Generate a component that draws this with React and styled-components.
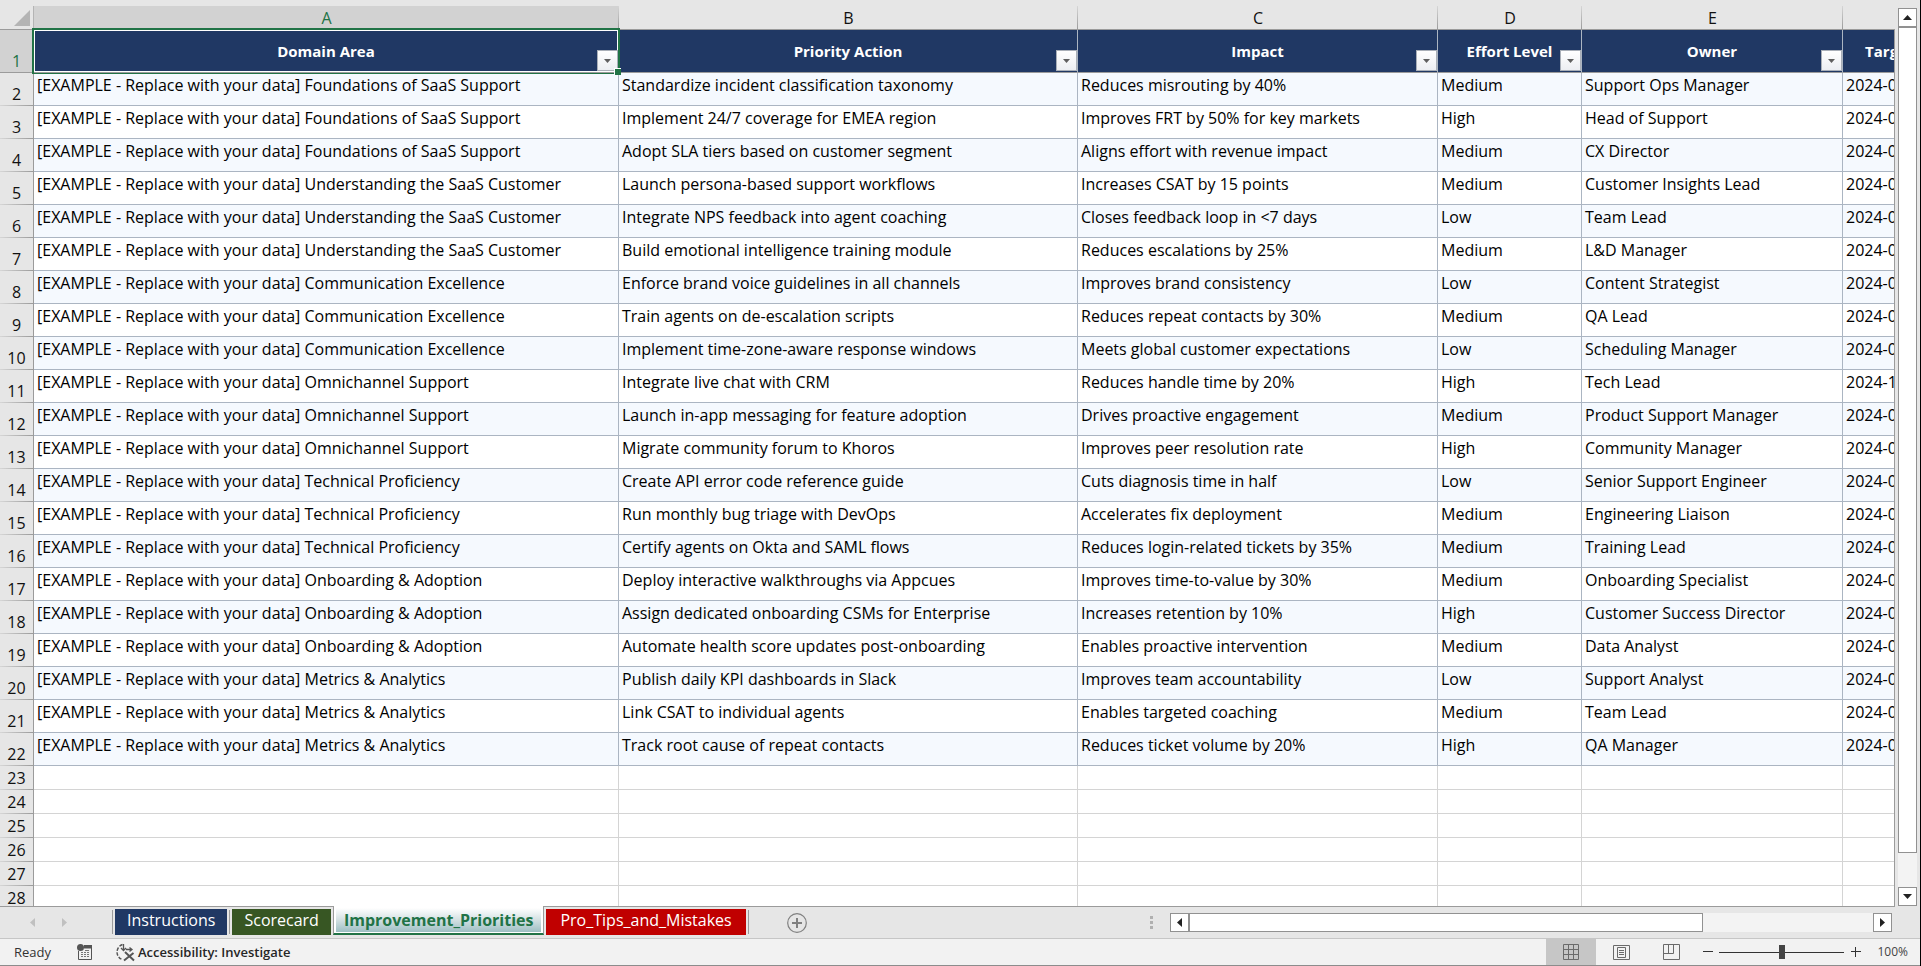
import React, { useState } from 'react';
import styled, { createGlobalStyle, css } from 'styled-components';

const LINE = '#9b9b9b';
const CELL_LINE = '#abb5c2';
const GREEN = '#217346';

const GlobalStyle = createGlobalStyle`
  * {
    box-sizing: border-box;
  }
  body {
    margin: 0;
    overflow: hidden;
    font-family: 'Open Sans', 'Noto Sans', sans-serif;
    background: #e6e6e6;
  }
  button {
    margin: 0;
    padding: 0;
    border: none;
    background: none;
    font: inherit;
    color: inherit;
  }
`;

const Window = styled.div`
  display: flex;
  flex-direction: column;
  height: 100vh;
  border-right: 1px solid #000;
`;

const Workspace = styled.div`
  display: flex;
  flex: 1;
  min-height: 0;
`;

const GridPort = styled.div`
  position: relative;
  flex: 1;
  min-width: 0;
  padding-top: 6px;
  overflow: hidden;
  border-bottom: 1px solid ${LINE};
  &::after {
    content: '';
    position: absolute;
    top: 29px;
    right: 0;
    bottom: 0;
    width: 1px;
    background: ${LINE};
  }
`;

const Grid = styled.table`
  width: 1976px;
  table-layout: fixed;
  border-collapse: separate;
  border-spacing: 0;
  font-size: 16px;
  line-height: 22px;
  th,
  td {
    padding: 0;
    white-space: nowrap;
  }
`;

const Col = styled.col`
  width: ${(p) => p.$width}px;
`;

const Corner = styled.td`
  height: 24px;
  border-right: 1px solid #b4b4b4;
  border-bottom: 1px solid ${LINE};
  vertical-align: bottom;
  svg {
    display: block;
    margin: 0 3px 3px auto;
  }
`;

const ColumnLetter = styled.th`
  height: 24px;
  border-bottom: 1px solid ${LINE};
  vertical-align: bottom;
  font-weight: 400;
  color: ${(p) => (p.$selected ? GREEN : '#111')};
  background: linear-gradient(#d6d6d6, ${LINE}) right / 1px 100% no-repeat
    ${(p) => (p.$selected ? '#d2d2d2' : '#e6e6e6')};
`;

const RowNumber = styled.th`
  border-right: 1px solid ${LINE};
  vertical-align: bottom;
  font-weight: 400;
  color: #111;
  background: linear-gradient(90deg, #d6d6d6, ${LINE}) bottom / 100% 1px
    no-repeat #e6e6e6;
  padding-bottom: 1px !important;
  ${(p) =>
    p.$selected &&
    css`
      color: ${GREEN};
      background: linear-gradient(${LINE}, ${LINE}) bottom / 100% 1px no-repeat
        #d2d2d2;
    `}
`;

const HeaderCell = styled.th`
  position: relative;
  height: 43px;
  border-right: 1px solid ${CELL_LINE};
  border-bottom: 1px solid ${LINE};
  background: #203864;
  color: #fff;
  font-size: 15px;
  font-weight: 700;
  ${(p) =>
    p.$selected &&
    css`
      z-index: 1;
      &::after {
        content: '';
        position: absolute;
        inset: 0;
        border: 1px solid #fff;
      }
    `}
`;

const SelectionBox = styled.span`
  position: absolute;
  inset: -2px;
  border: 2px solid ${GREEN};
  border-bottom-width: 1px;
  pointer-events: none;
  &::after {
    content: '';
    position: absolute;
    right: -3px;
    bottom: -2px;
    z-index: 2;
    width: 6px;
    height: 6px;
    border: solid #fff;
    border-width: 1px 0 0 1px;
    background: ${GREEN};
  }
`;

const FilterButton = styled.button`
  position: absolute;
  right: 0;
  bottom: 1px;
  z-index: 1;
  display: flex;
  align-items: center;
  justify-content: center;
  width: 21px;
  height: 21px;
  border: 1px solid #a9afb8;
  background: linear-gradient(#fff, #eceef2);
`;

const Cell = styled.td`
  height: 33px;
  padding: 1px 0 0 3px !important;
  border-right: 1px solid ${CELL_LINE};
  border-bottom: 1px solid ${CELL_LINE};
  vertical-align: top;
  color: #000;
  background: ${(p) => (p.$banded ? '#f5f9fe' : '#fff')};
`;

const EmptyCell = styled.td`
  height: 24px;
  border-right: 1px solid #d4d4d4;
  border-bottom: 1px solid #d4d4d4;
  background: #fff;
`;

const Scrollbar = styled.div`
  display: flex;
  ${(p) =>
    p.$vertical
      ? css`
          flex-direction: column;
          margin: 8px 3px 1px;
          width: 19px;
        `
      : css`
          flex: 0 1 722px;
          margin: 6px 28px 0 0;
          height: 19px;
        `}
`;

const ScrollButton = styled.button`
  display: flex;
  flex: none;
  align-items: center;
  justify-content: center;
  width: 19px;
  height: 19px;
  border: 1px solid #919191;
  background: #fff;
`;

const ScrollTrack = styled.div`
  display: flex;
  flex: 1;
  flex-direction: ${(p) => (p.$vertical ? 'column' : 'row')};
  background: #f3f3f3;
`;

const ScrollThumb = styled.div`
  flex: ${(p) => p.$share};
  border: 1px solid #919191;
  background: #fff;
`;

const ScrollRest = styled.div`
  flex: 1;
`;

const TabBar = styled.div`
  display: flex;
  align-items: flex-start;
  height: 32px;
  border-bottom: 1px solid #c6c6c6;
`;

const TabNav = styled.div`
  display: flex;
  gap: 16px;
  width: 110px;
  padding: 7px 0 0 24px;
`;

const NavButton = styled.button`
  display: flex;
  align-items: center;
  justify-content: center;
  width: 16px;
  height: 16px;
`;

const TabList = styled.div`
  display: flex;
  align-items: flex-start;
  gap: 2px;
  padding-left: 2px;
`;

const TabDivider = styled.span`
  width: 1px;
  height: 24px;
  margin-top: 3px;
  background: ${LINE};
`;

const Tab = styled.button`
  height: 26px;
  margin-top: 2px;
  padding: 0 ${(p) => p.$pad}px 4px;
  background: ${(p) => p.$color};
  color: #fff;
  font-size: 16px;
  line-height: 22px;
`;

const ActiveTab = styled.button`
  position: relative;
  height: 29px;
  margin-top: -1px;
  padding: 2px 2px 1px;
  border: solid ${LINE};
  border-width: 0 1px;
  border-bottom: 2px solid ${GREEN};
  background: #fff;
  color: ${GREEN};
  font-size: 16px;
  font-weight: 700;
  line-height: 22px;
  span {
    display: block;
    padding: 1px 8px;
    background: linear-gradient(#fff, #d3e0e2 50%, #9dbfc3);
  }
`;

const AddSheet = styled.button`
  margin: 6px 0 0 38px;
  svg {
    display: block;
  }
`;

const Grip = styled.div`
  display: grid;
  gap: 2px;
  margin: 9px 17px 0 auto;
  span {
    width: 3px;
    height: 3px;
    background: #b0b0b0;
  }
`;

const StatusBar = styled.footer`
  display: flex;
  align-items: center;
  height: 27px;
  padding: 0 12px 0 14px;
  border-bottom: 1px solid #8c8c8c;
  background: #f2f2f2;
  color: #333;
  font-size: 13px;
  line-height: 18px;
`;

const MacroButton = styled.button`
  margin: 0 22px 0 26px;
  svg {
    display: block;
  }
`;

const AccessibilityButton = styled.button`
  display: flex;
  align-items: center;
  gap: 2px;
  color: #262626;
  font-weight: 600;
`;

const ViewButtons = styled.div`
  display: flex;
  align-self: stretch;
  margin-left: auto;
`;

const ViewButton = styled.button`
  display: flex;
  align-items: center;
  justify-content: center;
  width: 50px;
  background: ${(p) => (p.$active ? '#c6c6c6' : 'transparent')};
`;

const ZoomButton = styled.button`
  display: flex;
  align-items: center;
  justify-content: center;
  width: 16px;
  height: 16px;
  margin: 0 3px 0 4px;
`;

const ZoomSlider = styled.input`
  appearance: none;
  width: 125px;
  height: 14px;
  margin: 0;
  background: linear-gradient(#333, #333) center / 100% 1px no-repeat;
  &::-webkit-slider-thumb {
    appearance: none;
    width: 6px;
    height: 14px;
    background: #444;
  }
`;

const ZoomValue = styled.span`
  width: 41px;
  text-align: right;
  color: #444;
  font-size: 12px;
`;

const EX = '[EXAMPLE - Replace with your data] ';

const COLUMNS = [
  { letter: 'A', title: 'Domain Area', width: 585 },
  { letter: 'B', title: 'Priority Action', width: 459 },
  { letter: 'C', title: 'Impact', width: 360 },
  { letter: 'D', title: 'Effort Level', width: 144 },
  { letter: 'E', title: 'Owner', width: 261 },
  { letter: 'F', title: 'Target Date', width: 133 },
];

const ROWS = [
  ['Foundations of SaaS Support', 'Standardize incident classification taxonomy', 'Reduces misrouting by 40%', 'Medium', 'Support Ops Manager', '2024-06-30'],
  ['Foundations of SaaS Support', 'Implement 24/7 coverage for EMEA region', 'Improves FRT by 50% for key markets', 'High', 'Head of Support', '2024-09-30'],
  ['Foundations of SaaS Support', 'Adopt SLA tiers based on customer segment', 'Aligns effort with revenue impact', 'Medium', 'CX Director', '2024-07-31'],
  ['Understanding the SaaS Customer', 'Launch persona-based support workflows', 'Increases CSAT by 15 points', 'Medium', 'Customer Insights Lead', '2024-08-31'],
  ['Understanding the SaaS Customer', 'Integrate NPS feedback into agent coaching', 'Closes feedback loop in <7 days', 'Low', 'Team Lead', '2024-06-30'],
  ['Understanding the SaaS Customer', 'Build emotional intelligence training module', 'Reduces escalations by 25%', 'Medium', 'L&D Manager', '2024-08-31'],
  ['Communication Excellence', 'Enforce brand voice guidelines in all channels', 'Improves brand consistency', 'Low', 'Content Strategist', '2024-06-30'],
  ['Communication Excellence', 'Train agents on de-escalation scripts', 'Reduces repeat contacts by 30%', 'Medium', 'QA Lead', '2024-07-31'],
  ['Communication Excellence', 'Implement time-zone-aware response windows', 'Meets global customer expectations', 'Low', 'Scheduling Manager', '2024-06-30'],
  ['Omnichannel Support', 'Integrate live chat with CRM', 'Reduces handle time by 20%', 'High', 'Tech Lead', '2024-10-31'],
  ['Omnichannel Support', 'Launch in-app messaging for feature adoption', 'Drives proactive engagement', 'Medium', 'Product Support Manager', '2024-08-31'],
  ['Omnichannel Support', 'Migrate community forum to Khoros', 'Improves peer resolution rate', 'High', 'Community Manager', '2024-09-30'],
  ['Technical Proficiency', 'Create API error code reference guide', 'Cuts diagnosis time in half', 'Low', 'Senior Support Engineer', '2024-06-30'],
  ['Technical Proficiency', 'Run monthly bug triage with DevOps', 'Accelerates fix deployment', 'Medium', 'Engineering Liaison', '2024-07-31'],
  ['Technical Proficiency', 'Certify agents on Okta and SAML flows', 'Reduces login-related tickets by 35%', 'Medium', 'Training Lead', '2024-08-31'],
  ['Onboarding & Adoption', 'Deploy interactive walkthroughs via Appcues', 'Improves time-to-value by 30%', 'Medium', 'Onboarding Specialist', '2024-08-31'],
  ['Onboarding & Adoption', 'Assign dedicated onboarding CSMs for Enterprise', 'Increases retention by 10%', 'High', 'Customer Success Director', '2024-09-30'],
  ['Onboarding & Adoption', 'Automate health score updates post-onboarding', 'Enables proactive intervention', 'Medium', 'Data Analyst', '2024-08-31'],
  ['Metrics & Analytics', 'Publish daily KPI dashboards in Slack', 'Improves team accountability', 'Low', 'Support Analyst', '2024-06-30'],
  ['Metrics & Analytics', 'Link CSAT to individual agents', 'Enables targeted coaching', 'Medium', 'Team Lead', '2024-07-31'],
  ['Metrics & Analytics', 'Track root cause of repeat contacts', 'Reduces ticket volume by 20%', 'High', 'QA Manager', '2024-09-30'],
];

const EMPTY_ROWS = [23, 24, 25, 26, 27, 28];

const ARROWS = {
  up: 'M0 5h9L4.5 0z',
  down: 'M0 0h9L4.5 5z',
  left: 'M5 0v9L0 4.5z',
  right: 'M0 0v9l5-4.5z',
};

function Arrow({ dir, color = '#222' }) {
  const flat = dir === 'up' || dir === 'down';
  const [w, h] = flat ? [9, 5] : [5, 9];
  return (
    <svg width={w} height={h} viewBox={`0 0 ${w} ${h}`}>
      <path d={ARROWS[dir]} fill={color} />
    </svg>
  );
}

function Scroller({ vertical, share }) {
  return (
    <Scrollbar $vertical={vertical}>
      <ScrollButton aria-label={vertical ? 'Scroll up' : 'Scroll left'}>
        <Arrow dir={vertical ? 'up' : 'left'} />
      </ScrollButton>
      <ScrollTrack $vertical={vertical}>
        <ScrollThumb $share={share} />
        <ScrollRest />
      </ScrollTrack>
      <ScrollButton aria-label={vertical ? 'Scroll down' : 'Scroll right'}>
        <Arrow dir={vertical ? 'down' : 'right'} />
      </ScrollButton>
    </Scrollbar>
  );
}

function SheetGrid() {
  return (
    <Grid>
      <colgroup>
        <Col $width={34} />
        {COLUMNS.map((c) => (
          <Col key={c.letter} $width={c.width} />
        ))}
      </colgroup>
      <thead>
        <tr>
          <Corner>
            <svg width='16' height='16' viewBox='0 0 16 16'>
              <path d='M16 0v16H0z' fill='#b4b4b4' />
            </svg>
          </Corner>
          {COLUMNS.map((c) => (
            <ColumnLetter key={c.letter} $selected={c.letter === 'A'}>
              {/* F is centred past the right edge of the view */}
              {c.letter === 'F' ? '' : c.letter}
            </ColumnLetter>
          ))}
        </tr>
        <tr>
          <RowNumber $selected>1</RowNumber>
          {COLUMNS.map((c) => (
            <HeaderCell key={c.letter} $selected={c.letter === 'A'}>
              {c.title}
              <FilterButton aria-label={`Filter ${c.title}`}>
                <svg width='7' height='4' viewBox='0 0 7 4'>
                  <path d='M0 0h7L3.5 4z' fill='#5f5f5f' />
                </svg>
              </FilterButton>
              {c.letter === 'A' && <SelectionBox />}
            </HeaderCell>
          ))}
        </tr>
      </thead>
      <tbody>
        {ROWS.map((row, i) => (
          <tr key={i}>
            <RowNumber>{i + 2}</RowNumber>
            {row.map((value, j) => (
              <Cell key={j} $banded={i % 2 === 0}>
                {j === 0 ? EX + value : value}
              </Cell>
            ))}
          </tr>
        ))}
        {EMPTY_ROWS.map((n) => (
          <tr key={n}>
            <RowNumber>{n}</RowNumber>
            {COLUMNS.map((c) => (
              <EmptyCell key={c.letter} />
            ))}
          </tr>
        ))}
      </tbody>
    </Grid>
  );
}

function SheetTabs() {
  return (
    <TabBar>
      <TabNav>
        <NavButton aria-label='Previous sheet'>
          <Arrow dir='left' color='#c0c0c0' />
        </NavButton>
        <NavButton aria-label='Next sheet'>
          <Arrow dir='right' color='#c0c0c0' />
        </NavButton>
      </TabNav>
      <TabList>
        <TabDivider />
        <Tab $color='#203864' $pad={12}>
          Instructions
        </Tab>
        <TabDivider />
        <Tab $color='#375623' $pad={12}>
          Scorecard
        </Tab>
        <ActiveTab>
          <span>Improvement_Priorities</span>
        </ActiveTab>
        <Tab $color='#c00000' $pad={14}>
          Pro_Tips_and_Mistakes
        </Tab>
        <TabDivider />
      </TabList>
      <AddSheet aria-label='New sheet'>
        <svg width='20' height='20' viewBox='0 0 20 20' fill='none'>
          <circle cx='10' cy='10' r='9.3' stroke='#808080' strokeWidth='1.2' />
          <path d='M10 5v10M5 10h10' stroke='#808080' strokeWidth='2' />
        </svg>
      </AddSheet>
      <Grip>
        <span />
        <span />
        <span />
      </Grip>
      <Scroller share={3} />
    </TabBar>
  );
}

function Status() {
  const [zoom, setZoom] = useState(100);
  return (
    <StatusBar>
      <span>Ready</span>
      <MacroButton aria-label='Record macro'>
        <svg width='16' height='16' viewBox='0 0 16 16' fill='none'>
          <path d='M1.5 7v8.5h13V1' stroke='#555' />
          <path d='M7 1h8v3.5H7z' fill='#555' />
          <circle cx='3.5' cy='3.5' r='3.5' fill='#555' />
          <path
            d='M4 8.5h2M7 8.5h2M10 8.5h2M4 10.5h2M7 10.5h2M10 10.5h2M4 12.5h2M7 12.5h2M10 12.5h2M8 6.5h4'
            stroke='#777'
          />
        </svg>
      </MacroButton>
      <AccessibilityButton>
        <svg width='21' height='19' viewBox='0 0 21 19' fill='none'>
          <path
            d='M7.5 1.500A8 8 0 0 0 7 16.5'
            stroke='#555'
            strokeWidth='1.4'
            strokeDasharray='3.5 1.5'
          />
          <path
            d='M8.5 1v6M6 5l2.5 2.5L11 5M11 6.5h6M14.5 4.5l2.5 2-2.5 2'
            stroke='#555'
            strokeWidth='1.3'
          />
          <path
            d='M10 9l9 8.5M18.5 10L9 17.5'
            stroke='#555'
            strokeWidth='2'
          />
        </svg>
        Accessibility: Investigate
      </AccessibilityButton>
      <ViewButtons>
        <ViewButton $active aria-label='Normal'>
          <svg width='16' height='16' viewBox='0 0 16 16' fill='none'>
            <path
              d='M.5.5h15v15H.5zM5.500.5v15M10.500.5v15M.5 5.500h15M.5 10.500h15'
              stroke='#6a6a6a'
            />
          </svg>
        </ViewButton>
        <ViewButton aria-label='Page layout'>
          <svg width='17' height='15' viewBox='0 0 17 15' fill='none'>
            <path
              d='M.5.5h16v14H.5zM4.500 2.500h8v10h-8zM6 5.500h5M6 7.500h5M6 9.500h5'
              stroke='#6a6a6a'
            />
          </svg>
        </ViewButton>
        <ViewButton aria-label='Page break preview'>
          <svg width='17' height='16' viewBox='0 0 17 16' fill='none'>
            <path
              d='M.5.5h16v15H.5zM.5 9.500h10v-9M5.500.5v9'
              stroke='#6a6a6a'
            />
          </svg>
        </ViewButton>
      </ViewButtons>
      <ZoomButton aria-label='Zoom out' onClick={() => setZoom(zoom - 10)}>
        <svg width='10' height='10' viewBox='0 0 10 10'>
          <path d='M0 4.500h10' stroke='#333' />
        </svg>
      </ZoomButton>
      <ZoomSlider
        type='range'
        aria-label='Zoom'
        min='0'
        max='200'
        value={zoom}
        onChange={(e) => setZoom(Number(e.target.value))}
      />
      <ZoomButton aria-label='Zoom in' onClick={() => setZoom(zoom + 10)}>
        <svg width='10' height='10' viewBox='0 0 10 10'>
          <path d='M0 4.500h10M4.500 0v10' stroke='#333' />
        </svg>
      </ZoomButton>
      <ZoomValue>{zoom}%</ZoomValue>
    </StatusBar>
  );
}

export default function App() {
  return (
    <Window>
      <GlobalStyle />
      <Workspace>
        <GridPort>
          <SheetGrid />
        </GridPort>
        <Scroller vertical share={24} />
      </Workspace>
      <SheetTabs />
      <Status />
    </Window>
  );
}
